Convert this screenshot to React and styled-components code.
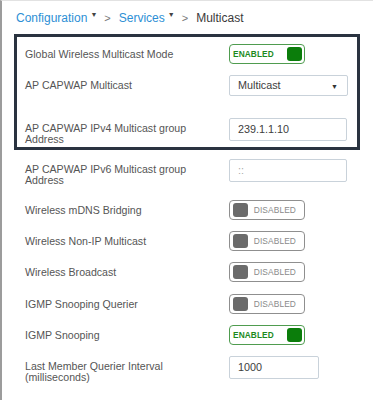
import styled, { createGlobalStyle } from "styled-components";

const GlobalStyle = createGlobalStyle`
  html, body {
    margin: 0;
    padding: 0;
    background: #ffffff;
  }
  body {
    font-family: "Liberation Sans", Arial, sans-serif;
  }
`

const Page = styled.div`
  width: 373px;
  height: 400px;
  box-sizing: border-box;
  border-left: 2px solid #9c9c9c;
  border-top: 1px solid #e2e2e2;
  padding: 0 13px 0 12px;
  overflow: hidden;
`

const Crumbs = styled.div`
  display: flex;
  align-items: center;
  height: 33px;
  padding-left: 2px;
  padding-bottom: 1px;
  font-size: 12px;
`

const CrumbLink = styled.span`
  color: #2d8fd5;
`

const Caret = styled.span`
  display: inline-block;
  font-size: 7px;
  color: #444;
  margin-left: 3px;
  transform: translateY(-3px);
`

const Sep = styled.span`
  color: #777;
  font-size: 11px;
  margin: 0 8px 0 7px;
`

const Current = styled.span`
  color: #3a3a3a;
`

const Highlight = styled.div`
  border: 3px solid #2a3340;
  padding: 7px 0 3px 8px;
  margin-top: -1px;
`

const Row = styled.div`
  display: grid;
  grid-template-columns: 204px auto;
  align-items: start;
  margin-top: ${props => props.space || 0}px;
  padding-left: ${props => props.indent || 0}px;
`

const Label = styled.div`
  color: #555;
  font-size: 10.6px;
  line-height: 10.5px;
  padding-top: ${props => props.top || 0}px;
`

const Toggle = styled.div`
  display: flex;
  flex-direction: ${props => props.on ? "row" : "row-reverse"};
  justify-content: space-between;
  align-items: center;
  box-sizing: border-box;
  width: 76px;
  height: 20px;
  padding: 0 2px 0 3px;
  border: 1px solid ${props => props.on ? "#4f9c4f" : "#8f8f8f"};
  border-radius: 4px;
  background: #fff;
`

const ToggleText = styled.span`
  font-size: ${props => props.on ? "8.3px" : "8.4px"};
  font-weight: ${props => props.on ? 700 : 400};
  color: ${props => props.on ? "#1d8a1d" : "#8a8a8a"};
  margin-right: ${props => props.on ? 0 : 6}px;
  letter-spacing: 0.1px;
`

const Knob = styled.span`
  width: 15px;
  height: 14px;
  border-radius: 3px;
  background: ${props => props.on ? "#0b7d0b" : "#6b6b6b"};
`

const Field = styled.div`
  box-sizing: border-box;
  width: ${props => props.w || 118}px;
  height: ${props => props.h || 23}px;
  border: 1px solid #c9d2da;
  border-radius: 2px;
  display: flex;
  align-items: center;
  justify-content: space-between;
  padding: 0 9px 1px 8px;
  font-size: 10.8px;
  color: ${props => props.faint ? "#aaa" : "#3d3d3d"};
  background: #fff;
`

const SelectArrow = styled.span`
  font-size: 7px;
  color: #333;
  margin-top: 3px;
`

const Switch = ({ on }) => (
  <Toggle on={on}>
    <ToggleText on={on}>{on ? "ENABLED" : "DISABLED"}</ToggleText>
    <Knob on={on} />
  </Toggle>
)

const App = () => {
  return (
    <>
      <GlobalStyle />
      <Page>
        <Crumbs>
          <CrumbLink>Configuration</CrumbLink>
          <Caret>▼</Caret>
          <Sep>&gt;</Sep>
          <CrumbLink>Services</CrumbLink>
          <Caret>▼</Caret>
          <Sep>&gt;</Sep>
          <Current>Multicast</Current>
        </Crumbs>

        <Highlight>
          <Row>
            <Label top={5}>Global Wireless Multicast Mode</Label>
            <Switch on />
          </Row>
          <Row space={11}>
            <Label top={5}>AP CAPWAP Multicast</Label>
            <Field h={21} w={119}>
              Multicast
              <SelectArrow>▼</SelectArrow>
            </Field>
          </Row>
          <Row space={22}>
            <Label top={5}>AP CAPWAP IPv4 Multicast group<br />Address</Label>
            <Field>239.1.1.10</Field>
          </Row>
        </Highlight>

        <Row space={9} indent={11}>
          <Label top={5}>AP CAPWAP IPv6 Multicast group<br />Address</Label>
          <Field faint>::</Field>
        </Row>
        <Row space={15} indent={11}>
          <Label top={5}>Wireless mDNS Bridging</Label>
          <Switch />
        </Row>
        <Row space={11} indent={11}>
          <Label top={5}>Wireless Non-IP Multicast</Label>
          <Switch />
        </Row>
        <Row space={11} indent={11}>
          <Label top={5}>Wireless Broadcast</Label>
          <Switch />
        </Row>
        <Row space={12} indent={11}>
          <Label top={5}>IGMP Snooping Querier</Label>
          <Switch />
        </Row>
        <Row space={11} indent={11}>
          <Label top={5}>IGMP Snooping</Label>
          <Switch on />
        </Row>
        <Row space={11} indent={11}>
          <Label top={5}>Last Member Querier Interval<br />(milliseconds)</Label>
          <Field w={90}>1000</Field>
        </Row>
      </Page>
    </>
  )
}

export default App;
